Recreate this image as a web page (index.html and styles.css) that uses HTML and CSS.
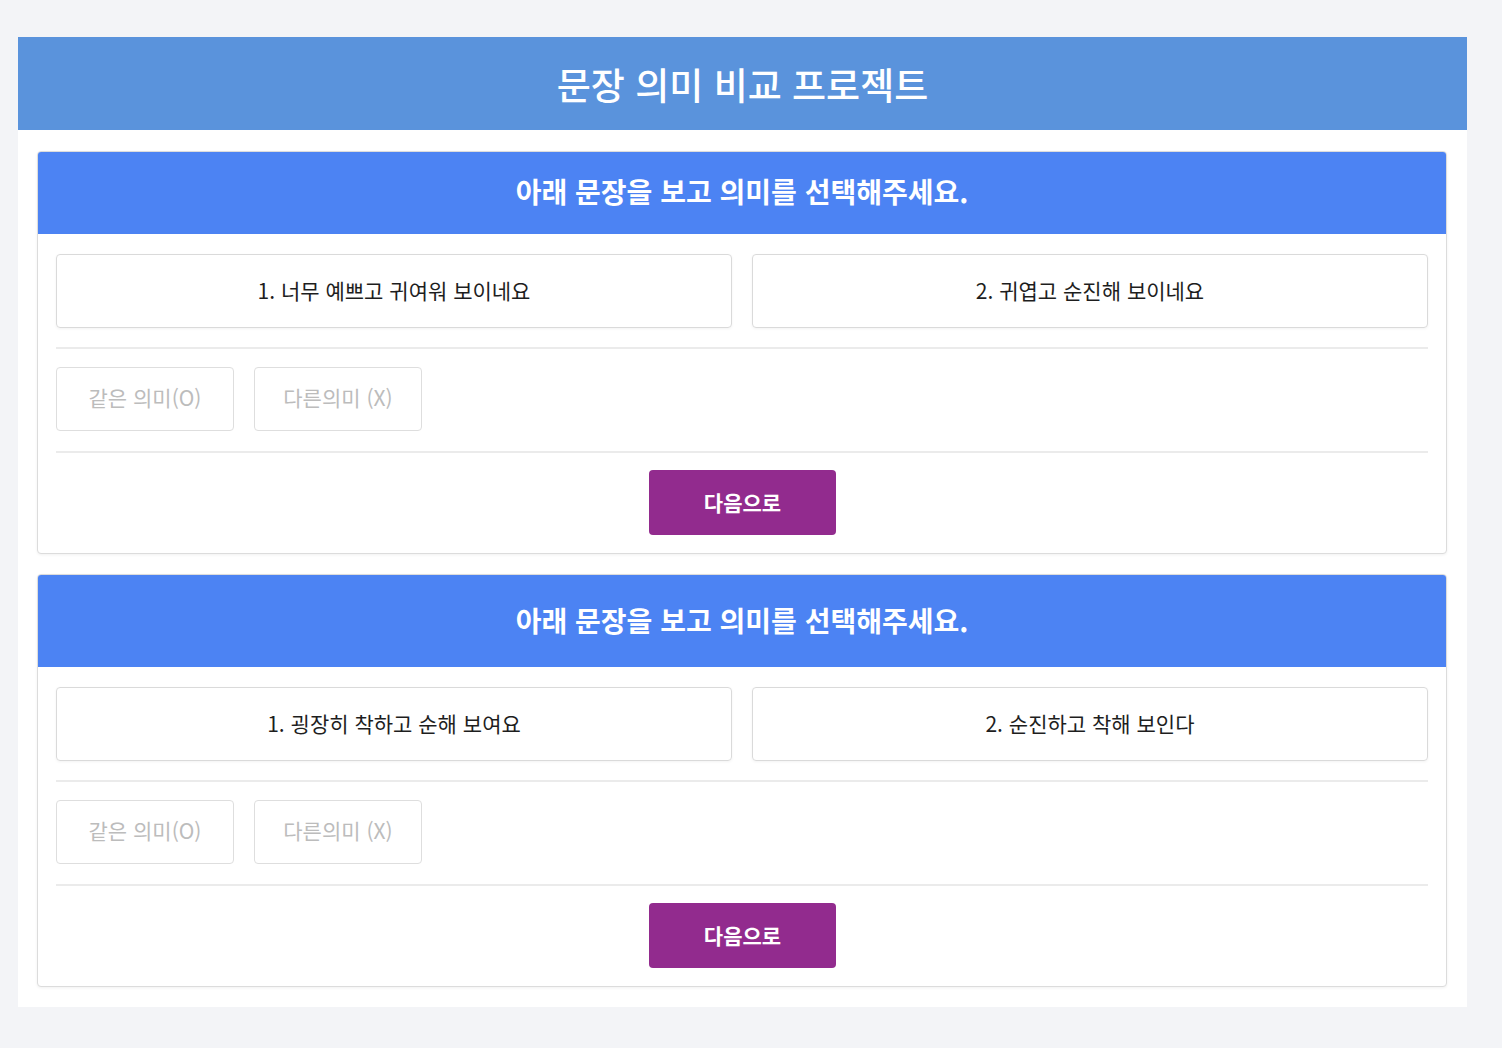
FILE: index.html
```html
<!DOCTYPE html>
<html lang="ko">
<head>
<meta charset="utf-8">
<title>문장 의미 비교 프로젝트</title>
<link rel="stylesheet" href="styles.css">
</head>
<body>
<div class="app">
  <header class="app-header">문장 의미 비교 프로젝트</header>
  <main class="app-body">
    <section class="card">
      <div class="card-header">아래 문장을 보고 의미를 선택해주세요.</div>
      <div class="card-content">
        <div class="sentences">
          <div class="sentence">1. 너무 예쁘고 귀여워 보이네요</div>
          <div class="sentence">2. 귀엽고 순진해 보이네요</div>
        </div>
        <div class="divider divider-top"></div>
        <div class="choices">
          <button class="choice choice-same">같은 의미(O)</button>
          <button class="choice choice-diff">다른의미 (X)</button>
        </div>
        <div class="divider divider-bottom"></div>
        <div class="actions">
          <button class="next">다음으로</button>
        </div>
      </div>
    </section>
    <section class="card">
      <div class="card-header card-header-tall">아래 문장을 보고 의미를 선택해주세요.</div>
      <div class="card-content">
        <div class="sentences">
          <div class="sentence">1. 굉장히 착하고 순해 보여요</div>
          <div class="sentence">2. 순진하고 착해 보인다</div>
        </div>
        <div class="divider divider-top"></div>
        <div class="choices">
          <button class="choice choice-same">같은 의미(O)</button>
          <button class="choice choice-diff">다른의미 (X)</button>
        </div>
        <div class="divider divider-bottom"></div>
        <div class="actions">
          <button class="next">다음으로</button>
        </div>
      </div>
    </section>
  </main>
</div>
</body>
</html>
```

FILE: styles.css
```css
* { box-sizing: border-box; }

body {
  margin: 0;
  padding: 37px 0 0 18px;
  background: #f3f4f7;
  font-family: "Noto Sans CJK KR", "Noto Sans", sans-serif;
}

.app {
  width: 1449px;
  background: #ffffff;
}

.app-header {
  height: 93px;
  background: #5a93dc;
  color: #ffffff;
  font-size: 37px;
  font-weight: 500;
  display: flex;
  align-items: center;
  justify-content: center;
}

.app-body {
  padding: 21px 20px 20px 19px;
  display: flex;
  flex-direction: column;
  gap: 20px;
}

.card {
  border: 1px solid #dcdcdc;
  border-radius: 4px;
  background: #ffffff;
  box-shadow: 0 1px 3px rgba(0,0,0,0.06);
  overflow: hidden;
}

.card-header {
  height: 82px;
  background: #4c83f3;
  color: #ffffff;
  font-size: 28px;
  font-weight: 700;
  display: flex;
  align-items: center;
  justify-content: center;
  padding-bottom: 4px;
}

.card-header-tall {
  height: 92px;
  padding-bottom: 2px;
}

.card-content {
  padding: 20px 18px 18px;
}

.sentences {
  display: flex;
  gap: 20px;
}

.sentence {
  flex: 1;
  height: 74px;
  border: 1px solid #dadada;
  border-radius: 4px;
  box-shadow: 0 1px 3px rgba(0,0,0,0.05);
  display: flex;
  align-items: center;
  justify-content: center;
  padding-bottom: 3px;
  font-size: 21px;
  color: #1e1e1e;
}

.divider {
  height: 2px;
  background: #ebebeb;
}

.divider-top { margin: 19px 0 18px; }
.divider-bottom { margin: 20px 0 17px; }

.choices {
  display: flex;
  gap: 20px;
}

.choice {
  height: 64px;
  background: #ffffff;
  border: 1px solid #dedede;
  border-radius: 4px;
  font-family: inherit;
  font-size: 21px;
  color: #bcbcbc;
  padding: 0 0 4px;
}

.choice-same { width: 178px; }
.choice-diff { width: 168px; }

.actions {
  display: flex;
  justify-content: center;
}

.next {
  width: 187px;
  height: 65px;
  background: #922b8e;
  color: #ffffff;
  border: none;
  border-radius: 4px;
  font-family: inherit;
  font-size: 21px;
  font-weight: 700;
  padding: 0 0 2px;
  margin-left: 1px;
}
```
